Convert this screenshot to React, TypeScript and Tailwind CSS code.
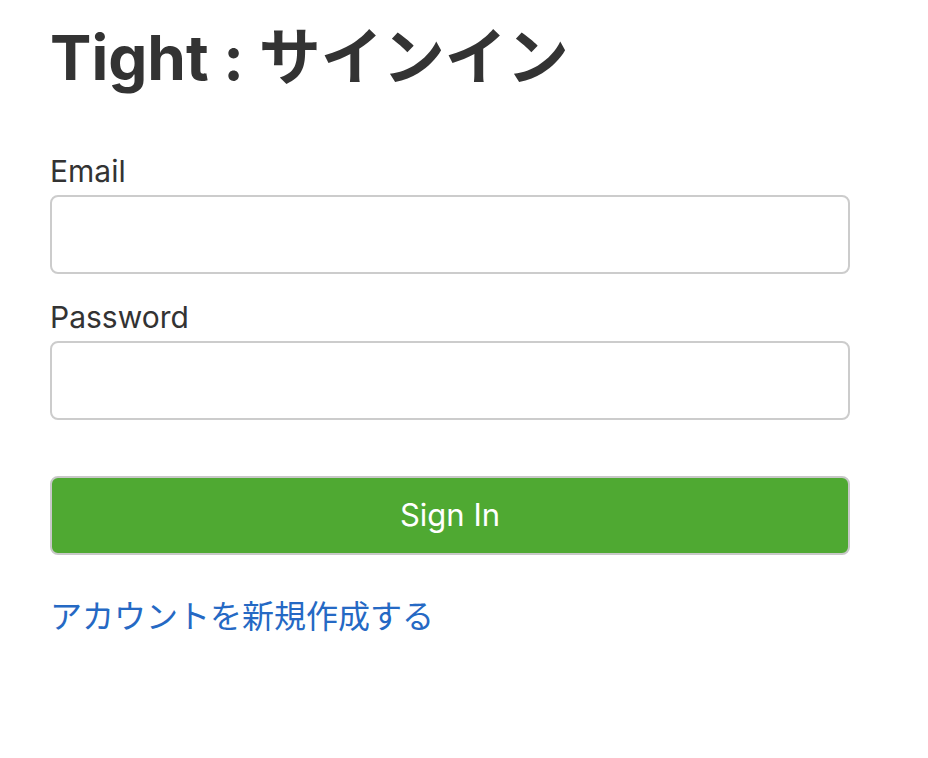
import React from 'react'

const font = { fontFamily: 'Inter, "Noto Sans CJK JP", sans-serif' }

function Field({ label, type }: { label: string; type: string }) {
    return (
        <div className="flex flex-col">
            <label className="text-[30px] leading-[40px] text-[#333333] mb-[4px]">
                {label}
            </label>
            <input
                type={type}
                className="h-[79px] w-full rounded-[8px] border-2 border-[#cccccc] bg-white px-4 outline-none"
            />
        </div>
    )
}

export default function App() {
    return (
        <div className="min-h-screen bg-white" style={font}>
            <div className="w-[800px] ml-[50px] pt-[20px]">
                <h1 className="text-[62px] leading-[76px] font-bold text-[#333333]">
                    Tight : サインイン
                </h1>
                <form className="mt-[55px] flex flex-col gap-[23px]">
                    <Field label="Email" type="email" />
                    <Field label="Password" type="password" />
                </form>
                <button className="mt-[56px] h-[79px] w-full rounded-[8px] border-2 border-[#c8c8c8] bg-[#4fa932] text-[31px] text-white">
                    Sign In
                </button>
                <a
                    href="#"
                    className="mt-[40px] block text-[32px] leading-[44px] text-[#2569c4]"
                >
                    アカウントを新規作成する
                </a>
            </div>
        </div>
    )
}
